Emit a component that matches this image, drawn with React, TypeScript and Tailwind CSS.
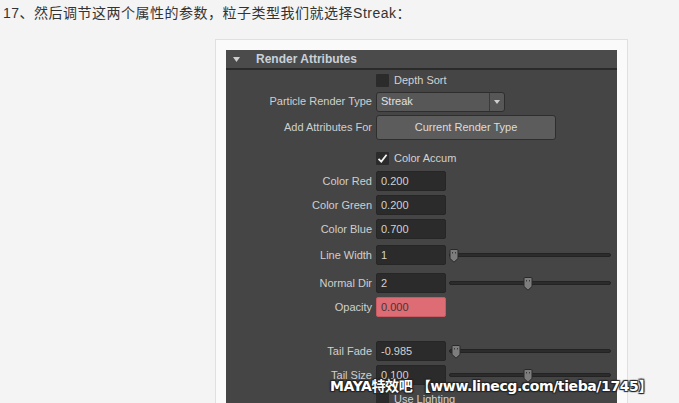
import type { ReactNode } from 'react';

const ui = { fontFamily: '"Liberation Sans", Arial, sans-serif' };

function Row({ label, h = 'h-[24px]', children }: { label?: string; h?: string; children?: ReactNode }) {
  return (
    <div className={`flex items-center ${h}`}>
      <div className="w-[150px] shrink-0 text-right pr-[4px] text-[11px] text-[#cfcfcf]">{label}</div>
      {children}
    </div>
  );
}

function Field({ value, warn = false }: { value: string; warn?: boolean }) {
  return (
    <div
      className={`w-[70px] h-[20px] rounded-[2px] border flex items-center px-[4px] text-[11px] ${
        warn ? 'bg-[#dd6c74] border-[#c85a62] text-[#4a3434]' : 'bg-[#2b2b2b] border-[#262626] text-[#d2d2d2]'
      }`}
    >
      {value}
    </div>
  );
}

function Slider({ pos }: { pos: number }) {
  return (
    <div className="relative ml-[3px] w-[162px] h-[14px] flex items-center">
      <div className="w-full h-[4px] rounded-full bg-[#2c2c2c] border border-[#232323]" />
      <svg className="absolute top-[1px]" style={{ left: pos }} width="10" height="14" viewBox="0 0 10 14">
        <path d="M1 1.5 Q1 0.5 2 0.5 H8 Q9 0.5 9 1.5 V9.5 L5 13.2 L1 9.5 Z" fill="#7d7d7d" stroke="#2a2a2a" strokeWidth="1" />
        <rect x="3" y="3" width="1" height="1.5" fill="#3c3c3c" />
        <rect x="6" y="3" width="1" height="1.5" fill="#3c3c3c" />
      </svg>
    </div>
  );
}

function Check({ checked = false, label }: { checked?: boolean; label: string }) {
  return (
    <div className="flex items-center gap-[5px]">
      <div className="w-[13px] h-[13px] bg-[#2b2b2b] rounded-[1px] flex items-center justify-center">
        {checked && (
          <svg width="11" height="11" viewBox="0 0 11 11">
            <path d="M1.5 5.8 L4.3 8.6 L9.6 1.8" stroke="#f2f2f2" strokeWidth="1.8" fill="none" />
          </svg>
        )}
      </div>
      <span className="text-[11px] text-[#d2d2d2]">{label}</span>
    </div>
  );
}

export default function App() {
  return (
    <div className="relative w-[679px] h-[403px] overflow-hidden bg-[#f4f4f4]">
      <p
        className="h-[26px] pl-[3px] pt-[4px] text-[14px] leading-[18px] text-[#333] tracking-[0.5px]"
        style={{ fontFamily: '"Liberation Sans", "Noto Sans CJK SC", sans-serif' }}
      >
        17、然后调节这两个属性的参数，粒子类型我们就选择Streak：
      </p>

      <div className="ml-[215px] mt-[13px] w-[413px] h-[380px] border border-[#e0e0e0] bg-[#fafafa] p-[10px]" style={ui}>
        <div className="w-[391px] h-[360px] bg-[#454545]">
          <div className="h-[18px] bg-[#4b4b4b] flex items-center border-b-[2px] border-[#2a2a2a] box-content">
            <svg className="ml-[7px]" width="7" height="5" viewBox="0 0 7 5">
              <path d="M0 0 H7 L3.5 5 Z" fill="#cfcfcf" />
            </svg>
            <span className="ml-[16px] text-[12px] font-bold text-[#c9d1da]">Render Attributes</span>
          </div>

          <Row h="h-[20px]">
            <Check label="Depth Sort" />
          </Row>
          <Row label="Particle Render Type" h="h-[23px]">
            <div className="w-[129px] h-[20px] rounded-[3px] bg-[#575757] border border-[#2e2e2e] flex items-center">
              <span className="flex-1 pl-[4px] text-[11px] text-[#e0e0e0]">Streak</span>
              <div className="w-[15px] h-full border-l border-[#3a3a3a] flex items-center justify-center">
                <svg width="6" height="4" viewBox="0 0 6 4">
                  <path d="M0 0 H6 L3 4 Z" fill="#cfcfcf" />
                </svg>
              </div>
            </div>
          </Row>
          <Row label="Add Attributes For" h="h-[28px]">
            <div className="w-[180px] h-[25px] rounded-[3px] bg-[#5c5c5c] border border-[#2e2e2e] flex items-center justify-center text-[11px] text-[#dcdcdc]">
              Current Render Type
            </div>
          </Row>

          <div className="h-[6px]" />
          <Row h="h-[22px]">
            <Check checked label="Color Accum" />
          </Row>
          <Row label="Color Red">
            <Field value="0.200" />
          </Row>
          <Row label="Color Green">
            <Field value="0.200" />
          </Row>
          <Row label="Color Blue">
            <Field value="0.700" />
          </Row>
          <Row label="Line Width" h="h-[28px]">
            <Field value="1" />
            <Slider pos={0} />
          </Row>
          <div className="h-[2px]" />
          <Row label="Normal Dir">
            <Field value="2" />
            <Slider pos={74} />
          </Row>
          <Row label="Opacity">
            <Field value="0.000" warn />
          </Row>
          <div className="h-[20px]" />
          <Row label="Tail Fade">
            <Field value="-0.985" />
            <Slider pos={2} />
          </Row>
          <Row label="Tail Size">
            <Field value="0.100" />
            <Slider pos={74} />
          </Row>
          <Row>
            <Check label="Use Lighting" />
          </Row>
        </div>
      </div>

      <div
        className="absolute left-[330px] top-[376px] text-[14px] font-bold text-white whitespace-nowrap tracking-[-0.4px]"
        style={{
          fontFamily: '"DejaVu Sans", "Noto Sans CJK SC", sans-serif',
          textShadow: '1px 1px 1px #222, -1px -1px 1px #222, 1px -1px 1px #222, -1px 1px 1px #222',
        }}
      >
        MAYA特效吧 【www.linecg.com/tieba/1745】
      </div>
    </div>
  );
}
